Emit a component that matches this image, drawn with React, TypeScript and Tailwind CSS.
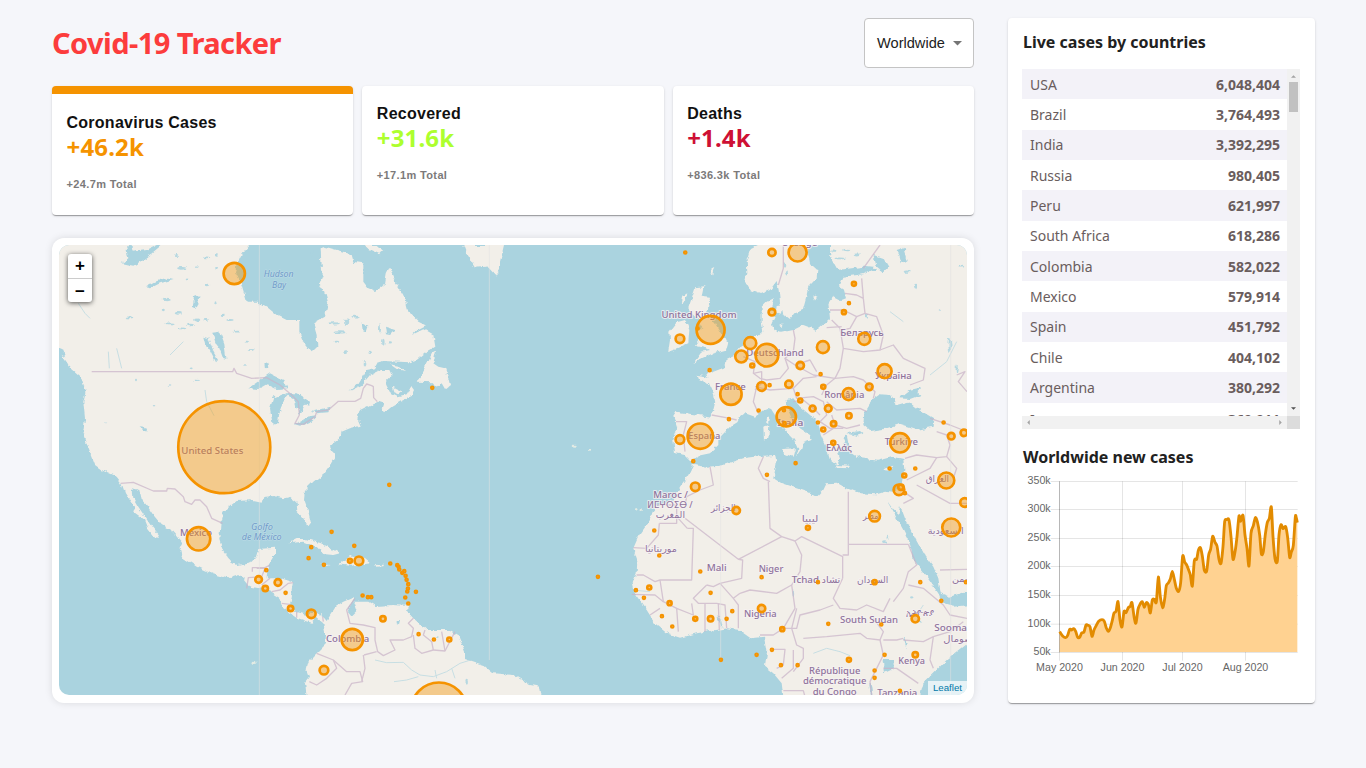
import React from "react";

const countries: [string, string][] = [
  ["USA", "6,048,404"],
  ["Brazil", "3,764,493"],
  ["India", "3,392,295"],
  ["Russia", "980,405"],
  ["Peru", "621,997"],
  ["South Africa", "618,286"],
  ["Colombia", "582,022"],
  ["Mexico", "579,914"],
  ["Spain", "451,792"],
  ["Chile", "404,102"],
  ["Argentina", "380,292"],
  ["Iran", "369,911"],
];

/* Map geometry is stored at three units per screen pixel. */
const americas =
  "27,30 600,30 575,60 560,90 555,110 575,150 590,200 625,200 650,215 680,240 710,255 748,255 748,290 760,320 785,352 802,335 800,300 790,265 825,245 835,205 825,170 805,155 818,120 814,80 812,40 825,35 880,50 905,62 910,80 940,85 940,140 955,160 975,168 1005,145 1010,115 1018,98 1035,140 1060,180 1070,220 1085,240 1105,260 1130,272 1095,290 1085,300 1120,283 1150,300 1156,335 1130,350 1100,375 1080,382 1000,378 985,382 975,400 950,405 925,445 895,470 935,450 960,420 990,405 1018,405 1025,420 1005,440 1010,452 1020,472 1045,484 1070,478 1083,455 1092,468 1085,483 1050,500 1025,515 1005,532 995,520 1000,505 985,500 960,510 930,525 922,550 932,572 900,580 875,590 870,610 850,625 840,635 855,665 840,690 822,715 790,740 765,765 762,795 775,830 782,860 772,874 760,850 742,830 740,800 720,785 700,790 670,783 640,786 635,803 600,796 560,798 520,830 512,860 508,915 520,950 545,980 565,990 605,980 618,965 625,942 675,938 675,960 660,985 652,1010 650,1030 690,1030 732,1043 725,1085 720,1110 735,1130 770,1140 800,1130 822,1145 830,1155 855,1115 880,1100 915,1085 900,1110 893,1130 905,1145 920,1130 910,1100 955,1100 975,1113 1030,1110 1075,1113 1068,1125 1090,1150 1130,1185 1200,1185 1225,1200 1245,1250 1245,1272 1300,1290 1330,1315 1390,1320 1440,1350 1470,1355 1475,1385 770,1385 765,1345 780,1325 770,1300 775,1280 800,1255 825,1230 825,1190 820,1165 800,1148 785,1163 740,1148 700,1120 690,1090 660,1070 640,1062 600,1055 580,1030 565,1020 535,1030 490,1018 440,995 395,965 390,945 400,925 370,890 335,870 310,840 290,810 275,795 268,765 248,760 250,790 265,815 285,845 305,875 325,900 320,912 295,880 285,855 250,830 255,815 245,805 225,775 215,745 200,725 160,708 135,690 115,640 100,590 105,550 100,500 107,470 95,430 60,400 35,340 27,325";

const oldWorld =
  "2340,20 2340,60 2365,105 2405,100 2440,95 2480,100 2440,118 2380,125 2370,150 2382,168 2388,190 2375,195 2350,182 2335,205 2340,250 2315,272 2300,285 2260,270 2230,285 2190,293 2170,285 2165,262 2178,235 2160,225 2172,190 2150,200 2135,215 2135,262 2140,290 2125,303 2095,303 2075,330 2050,365 2030,375 2025,400 1990,413 1970,403 1975,425 1940,420 1945,433 1980,448 1990,470 1996,500 1985,545 1910,535 1880,530 1870,545 1882,580 1870,615 1875,655 1905,660 1925,680 1945,662 1980,655 2005,630 2005,612 2040,575 2062,562 2070,545 2085,535 2115,545 2140,527 2160,520 2178,548 2208,590 2232,615 2245,645 2238,665 2255,640 2258,622 2285,612 2280,600 2250,580 2225,550 2212,520 2210,495 2230,490 2250,515 2280,540 2305,565 2312,600 2330,640 2340,672 2362,690 2370,668 2360,640 2390,640 2380,612 2400,592 2430,588 2390,600 2395,625 2400,650 2430,670 2485,677 2530,665 2560,672 2563,705 2555,745 2530,773 2505,770 2480,778 2430,775 2390,760 2360,743 2330,745 2320,765 2300,786 2270,770 2195,745 2170,730 2180,685 2175,660 2140,662 2080,670 2010,692 1970,695 1930,690 1915,720 1890,755 1870,795 1815,815 1800,855 1765,905 1750,940 1762,975 1760,1015 1748,1045 1755,1075 1790,1125 1815,1165 1850,1195 1890,1208 1940,1195 2030,1180 2070,1185 2105,1210 2145,1205 2152,1245 2145,1295 2170,1315 2195,1345 2200,1385 2610,1385 2620,1345 2650,1315 2690,1275 2760,1220 2760,20";

const islands = [
  "1240,30 1250,55 1275,95 1310,92 1338,122 1350,105 1350,80 1362,30",
  "945,30 980,30 1000,48 990,58 955,42",
  "1150,350 1158,348 1150,385 1165,395 1185,400 1195,430 1200,450 1185,462 1175,445 1160,458 1150,442 1100,440 1115,420",
  "1020,388 1045,392 1065,408 1040,402",
  "1025,455 1055,470 1045,478 1030,472",
  "35,360 60,372 100,395 125,425 100,415 60,395",
  "715,925 740,912 770,912 810,925 870,955 850,960 820,957 800,935 760,920",
  "868,988 900,960 945,972 960,985 900,992",
  "978,990 1002,989 1000,994 980,995",
  "810,987 842,990 825,995",
  "1062,1113 1075,1110 1072,1122 1060,1122",
  "2140,22 2100,42 2090,75 2092,115 2085,140 2100,165 2130,177 2160,165 2180,138 2186,165 2190,200 2200,240 2220,255 2236,235 2258,225 2270,180 2275,155 2300,130 2302,105 2280,85 2274,55 2282,22",
  "1935,160 1960,157 1955,182 1980,185 1975,215 1970,235 1995,265 2010,290 2020,312 2035,320 2028,345 1990,355 1955,370 1930,385 1955,350 1980,345 1962,335 1935,330 1948,310 1940,290 1960,280 1945,255 1930,240 1915,220 1925,190",
  "1880,262 1905,255 1918,285 1915,325 1880,340 1855,348 1860,315 1858,290",
  "2180,210 2198,208 2196,240 2178,235",
  "2200,642 2235,640 2228,665 2200,655",
  "2140,575 2158,570 2155,612 2142,618",
  "2148,545 2158,545 2154,567 2146,560",
  "2358,690 2400,692 2395,700 2360,698",
  "2503,698 2530,692 2522,707 2508,706",
  "2290,185 2302,180 2295,200",
  "2190,270 2200,265 2198,280",
  "1985,100 1995,95 1990,118 1984,115",
  "1900,185 1912,178 1905,200 1895,205",
];

const waters = [
  "2440,570 2443,530 2465,495 2490,478 2520,480 2540,510 2575,500 2600,520 2650,550 2648,575 2600,585 2545,568 2500,582 2460,588",
  "2548,490 2580,465 2615,457 2602,472 2612,480 2580,492",
  "2398,598 2430,588 2440,596 2420,602",
  "2508,793 2530,825 2545,838 2550,810 2565,850 2590,900 2620,955 2650,995 2665,1030 2672,1075 2700,1085 2760,1065 2760,1110 2710,1115 2675,1105 2665,1075 2630,1025 2592,975 2578,920 2560,885 2535,840",
  "215,85 235,70 230,45 240,30 250,50 290,45 320,30 335,30 305,55 270,80 250,92",
  "285,157 315,140 345,130 368,135 330,145 300,160",
  "428,218 432,185 448,180 445,205 436,222",
  "487,293 510,290 523,325 529,375 520,372 508,340 496,325",
  "460,305 475,310 490,350 504,375 498,382 480,345 465,325",
  "595,460 640,428 660,415 700,435 712,460 680,462 650,448 625,462",
  "700,476 670,488 660,520 668,568 684,568 688,530 700,500 718,480",
  "705,475 740,475 780,500 778,512 765,508 750,540 735,510 730,490",
  "732,570 770,548 802,544 785,560 750,575",
  "785,530 842,515 835,532 800,535",
  "646,385 655,380 658,395 648,402",
  "272,573 288,578 286,590 278,585",
  "2470,60 2500,70 2515,95 2500,112 2480,95",
  "2540,45 2560,38 2570,75 2555,85 2548,60",
  "2498,1275 2530,1275 2532,1302 2505,1315",
  "2458,1345 2465,1345 2470,1378 2462,1378",
  "2565,1205 2572,1225 2570,1240 2560,1210",
  "1005,275 1015,278 1035,285 1020,300 1008,298",
  "935,265 955,275 950,290 938,285",
  "903,1110 915,1115 912,1135 902,1125",
  "1040,1155 1050,1155 1046,1172 1040,1168",
  "2002,1140 2012,1150 2018,1178 2012,1175",
  "725,30 755,30 740,45",
  "778,40 792,40 785,65",
];

const specks: [number, number, number, number][] = [
  [395, 100, 18, 6], [470, 70, 10, 4], [440, 95, 12, 5], [500, 60, 8, 12], [238, 247, 14, 4], [120, 90, 12, 3],
  [350, 195, 16, 5], [385, 235, 14, 6], [360, 265, 18, 4], [420, 270, 16, 5], [440, 255, 14, 6], [520, 240, 10, 5],
  [540, 255, 14, 4], [470, 150, 10, 5], [495, 205, 6, 9], [560, 290, 12, 4], [590, 320, 9, 4], [605, 345, 12, 4],
  [850, 265, 22, 5], [870, 292, 26, 5], [890, 260, 10, 14], [915, 245, 14, 4], [860, 320, 10, 4], [945, 385, 5, 14],
  [885, 350, 8, 6], [957, 352, 7, 7], [1000, 320, 5, 12], [1020, 322, 8, 5], [990, 280, 4, 18], [168, 565, 5, 4],
  [315, 512, 5, 3], [440, 436, 14, 3], [425, 400, 8, 4], [585, 390, 8, 3], [258, 435, 4, 5], [360, 450, 5, 3],
  [380, 60, 10, 4], [410, 130, 8, 4], [500, 100, 7, 6], [395, 280, 14, 4], [340, 225, 6, 5], [470, 255, 9, 4],
  [2595, 155, 8, 12], [2570, 110, 12, 5], [2450, 245, 6, 8], [2670, 225, 5, 3], [2700, 330, 6, 30], [2720, 400, 4, 18],
  [2735, 95, 10, 4], [2390, 45, 18, 5], [2370, 70, 22, 4], [2420, 60, 12, 6], [2350, 50, 8, 5], [2205, 90, 5, 12],
  [2210, 115, 5, 9], [2505, 920, 12, 6], [2515, 905, 3, 8], [2585, 1090, 6, 5], [2610, 1160, 5, 4], [2230, 1075, 3, 12],
  [1250, 1340, 5, 8], [1165, 1203, 5, 4],
];

const rivers = [
  "975,1275 1010,1283 1060,1282 1085,1305 1110,1320 1150,1325 1190,1310 1230,1285 1262,1275",
  "1032,1340 1070,1335 1105,1325", "1160,1330 1155,1305", "1215,1330 1205,1300",
  "85,205 105,235 120,250", "465,465 470,500 492,542", "2620,1110 2600,1140", "2290,1255 2330,1240 2370,1250 2400,1262",
  "200,340 215,400", "175,350 178,400", "360,360 400,320", "2520,230 2560,260", "2640,420 2690,380 2720,320",
  "1745,1065 1800,1070",
];

const borders = [
  "125,410 548,410 552,400 560,415 605,430 650,428 690,450 725,480 745,500 748,540 735,565 760,568 795,545 800,530 835,525 865,499 915,499 932,490 940,460 950,447 965,452 970,455 971,488 982,500",
  "212,745 250,742 310,768 350,768 352,760 375,762 400,785 405,800 425,808 435,795 450,795 470,815 485,850 518,865",
  "607,1010 607,998 645,998 660,990", "590,1060 595,1028 635,1025 645,1000 620,1000", "635,1050 660,1030", "665,1070 690,1065 715,1045 730,1043", "695,1105 720,1108", "740,1148 740,1130", "820,1160 818,1145",
  "915,1090 890,1125 900,1165 940,1170 975,1178 975,1215 983,1250 1000,1262 1035,1245 1020,1215 1060,1215 1085,1205 1090,1180 1075,1165 1090,1150",
  "800,1255 850,1275 860,1300 830,1330 800,1350 778,1340", "850,1275 890,1310 930,1310 938,1340 905,1345 885,1380", "942,1260 980,1250", "940,1260 945,1300 935,1340",
  "1090,1200 1095,1240 1115,1255 1150,1245 1145,1220 1120,1200 1125,1185", "1150,1245 1185,1248 1215,1190", "1185,1248 1175,1190",
  "2200,30 2200,100 2185,150", "2490,30 2440,100", "2435,130 2440,190 2420,180 2385,175", "2440,190 2445,235 2420,245 2380,225 2340,225", "2445,235 2480,245 2500,300 2490,345 2440,350 2380,340 2370,280 2345,255", "2375,275 2330,278", "2420,245 2400,280 2375,285",
  "2490,345 2530,330 2560,370 2625,400 2620,435 2580,450", "2380,340 2370,400 2355,430 2290,420 2235,390 2205,370 2230,350 2235,310 2230,285",
  "2235,390 2280,375 2300,410", "2205,370 2215,400 2190,430 2150,435 2130,430 2110,415 2115,380 2080,365", "2115,455 2160,465 2230,460 2260,430 2300,425", "2120,455 2110,500 2125,535", "2110,415 2135,410 2135,445 2115,465",
  "2230,460 2240,490 2290,485 2320,500 2330,540 2310,560", "2355,430 2330,450 2315,480", "2355,430 2410,425 2440,435 2475,470 2470,490", "2330,500 2360,525 2430,520 2450,530", "2345,540 2355,570 2390,580 2430,570", "2310,560 2340,580 2380,580", "2320,600 2350,580", "2230,500 2260,495 2290,520 2310,540", "1985,540 2040,550 2060,555", "1878,560 1910,560 1900,600 1905,650",
  "2640,550 2700,570 2751,590", "2565,670 2600,660 2660,668 2690,665 2700,630 2690,600 2660,590", "2690,665 2720,700 2710,730", "2660,668 2640,700 2600,720 2570,735",
  "1980,695 1990,750 1950,765 1910,785 1905,810", "1828,865 1880,865 1880,810 1820,810", "1828,865 1825,900 1790,940 1750,938", "1912,880 1930,880 1925,1035 1830,1035 1815,1040 1780,1020 1760,1020", "1905,850 2065,973 2195,905 2160,880 2155,740", "1912,880 1880,845", "2140,665 2125,700 2140,730 2160,740", "2065,973 2078,975 2075,1030 2010,1045 1990,1055 1970,1050", "2195,905 2235,918 2255,905 2378,965 2378,1030", "2235,918 2255,960 2250,1010 2225,1050", "2395,770 2395,960 2378,960", "2395,928 2575,928", "2378,1030 2350,1090 2370,1120 2420,1125 2450,1110 2500,1130 2520,1090", "2575,928 2600,990 2575,1010 2560,1060 2530,1100",
  "2070,1075 2100,1065 2180,1075 2225,1050 2235,1120 2200,1180 2170,1200 2130,1200", "2010,1045 2050,1090 2065,1110 2065,1180", "2050,1090 2070,1075", "1970,1050 1930,1090 1945,1105 2000,1105 2025,1110 2030,1180", "1925,1105 1930,1140 1880,1120 1885,1190", "1965,1105 1965,1190", "2005,1105 2008,1185", "1830,1035 1840,1100 1880,1120", "1745,1078 1815,1080 1840,1100", "1800,1140 1830,1120",
  "2200,1180 2240,1180 2250,1140 2310,1125 2350,1110", "2240,1120 2225,1180 2240,1230 2260,1240 2260,1270 2230,1310", "2260,1210 2330,1205 2430,1195 2450,1210 2490,1215 2500,1190 2470,1150", "2170,1243 2205,1243 2200,1290 2180,1300", "2230,1245 2230,1300 2195,1330", "2200,1367 2260,1367 2265,1385", "2490,1215 2500,1260 2480,1300 2460,1340 2465,1380", "2500,1300 2540,1300 2605,1345", "2500,1215 2540,1215 2560,1210", "2560,1215 2620,1220 2650,1205 2640,1275 2650,1300", "2575,1050 2620,1060 2680,1110 2700,1140 2751,1150", "2650,1205 2700,1190 2740,1160",
  "2560,770 2590,790 2560,805", "2600,750 2700,805 2751,805", "2670,1005 2751,1003", "2720,420 2745,410 2725,440 2751,470",
];

type Label = [string, number, number, number, number, boolean?];
const labels: Label[] = [
  ["United States", 487, 656, 27, 186], ["México", 438, 904, 27, 96], ["Colombia", 893, 1221, 27, 130],
  ["Hudson", 686, 126, 26, 90, true], ["Bay", 687, 158, 26, 42, true], ["Golfo", 636, 884, 26, 66, true], ["de México", 635, 916, 26, 120, true],
  ["United Kingdom", 1947, 249, 27, 225], ["Sverige", 2250, 34, 27, 104], ["Беларусь", 2436, 302, 27, 130], ["Deutschland", 2175, 363, 27, 172], ["Україна", 2530, 433, 27, 110],
  ["France", 2041, 466, 27, 92], ["România", 2383, 488, 27, 120], ["España", 1963, 612, 27, 96], ["Italia", 2221, 573, 27, 78], ["Türkiye", 2554, 631, 27, 100], ["Ελλάς", 2367, 647, 27, 78],
  ["Maroc /", 1862, 788, 27, 104], ["ⵍⵎⵖⵔⵉⴱ /", 1860, 819, 27, 136], ["المغرب", 1861, 850, 29, 88], ["الجزائر", 2020, 829, 29, 74], ["ليبيا", 2280, 861, 29, 50], ["مصر", 2462, 851, 29, 46],
  ["العراق", 2662, 742, 29, 70], ["السعودية", 2687, 898, 29, 108], ["موريتانيا", 1833, 952, 29, 96], ["Mali", 2000, 1009, 27, 60], ["Niger", 2163, 1010, 27, 74], ["Tchad تشاد", 2298, 1043, 28, 146], ["السودان", 2468, 1044, 29, 94],
  ["اليمن", 2738, 1041, 29, 64], ["Nigeria", 2131, 1147, 27, 98], ["South Sudan", 2457, 1164, 27, 174], ["ኢትዮጵያ", 2610, 1144, 28, 84], ["Soomaaliya", 2735, 1188, 27, 164], ["الصومال", 2733, 1222, 29, 106],
  ["Kenya", 2585, 1288, 27, 80], ["République", 2354, 1316, 27, 154], ["démocratique", 2354, 1348, 27, 190], ["du Congo", 2354, 1380, 27, 132], ["Tanzania", 2542, 1382, 27, 120],
];

type Dot = [number, number, number?];
const dots: Dot[] = [
  [552, 115, 36], [522, 636, 142], [445, 911, 39], [844, 890], [783, 936], [775, 969], [821, 989], [912, 932], [899, 977, 10], [926, 977, 17],
  [648, 1005], [625, 1033, 14], [645, 1060, 12], [683, 1042, 14], [706, 1073], [721, 1120, 12], [783, 1136, 17], [906, 1213, 36], [821, 1305, 17],
  [1017, 749], [1020, 985], [1041, 990], [1045, 995], [1047, 1003], [1056, 1013], [1062, 1008], [1066, 1022], [1069, 1034], [1074, 1047], [1073, 1060],
  [1071, 1069], [1097, 1070], [1065, 1087], [1074, 1105], [937, 1081], [953, 1086], [963, 1086], [998, 1151, 12], [1105, 1197], [1151, 1213],
  [1197, 1213, 10], [1166, 1426, 88], [1643, 1025], [1812, 886], [1827, 961], [1757, 1065], [1797, 1057, 10], [1781, 1088], [1146, 458],
  [1905, 52], [2165, 52, 15], [2242, 52, 31], [2411, 146, 10], [2396, 204], [2381, 231, 10], [2165, 231, 14], [1981, 284, 46], [1942, 280],
  [1889, 311, 17], [2100, 324, 22], [2073, 364, 22], [2150, 360, 38], [2318, 336, 22], [2442, 311, 22], [2106, 391, 10], [2250, 391, 15], [2311, 417],
  [1978, 405], [2042, 477, 36], [2134, 454, 17], [2158, 450], [2216, 447, 15], [2319, 455, 10], [2503, 408, 25], [2457, 455, 14], [2395, 477, 22],
  [2242, 477], [2250, 496, 10], [2287, 520, 13], [2334, 520, 14], [2396, 542, 12], [2303, 562], [2350, 566, 12], [2319, 583, 10], [2349, 623, 10],
  [2208, 545, 33], [2201, 525], [2203, 564], [2125, 526], [2036, 552], [1950, 603, 42], [1889, 613, 17], [1929, 678], [2236, 684], [2150, 719],
  [2549, 623, 33], [2680, 562], [2703, 603, 14], [2741, 593, 14], [2518, 700], [2595, 700], [2562, 721, 10], [2688, 736, 28], [2546, 764, 20],
  [2552, 756, 12], [2564, 774], [2743, 802, 17], [2703, 877, 31], [2473, 843, 20], [1935, 755, 17], [2058, 826, 15], [2273, 878, 10], [1950, 1009],
  [2134, 1026], [2303, 1041], [2473, 1041, 10], [2610, 1041], [2747, 1041], [2673, 1097], [2595, 1151, 15], [2493, 1168], [2334, 1166], [2134, 1120, 15],
  [1981, 1073], [2046, 1128], [2029, 1151], [1981, 1151, 12], [1935, 1151, 10], [1858, 1104, 10], [1835, 1143], [1866, 1174], [2196, 1182, 10],
  [2165, 1244], [2119, 1259], [2012, 1274], [2192, 1290], [2242, 1290], [2396, 1274, 10], [2503, 1259], [2595, 1259, 12], [2473, 1306], [2473, 1328], [2549, 1367],
];

function WorldMap() {
  return (
    <svg viewBox="27 30 2724 1350" className="block h-full w-full rounded-[10px]" role="img" aria-label="Cases map">
      <defs>
        <filter id="coast" filterUnits="userSpaceOnUse" x="0" y="0" width="2780" height="1420" colorInterpolationFilters="sRGB">
          <feTurbulence type="fractalNoise" baseFrequency="0.05" numOctaves="3" seed="4" />
          <feDisplacementMap in="SourceGraphic" scale="15" xChannelSelector="R" yChannelSelector="G" />
        </filter>
      </defs>
      <rect x="0" y="0" width="2780" height="1420" fill="#aad3df" />
      <g filter="url(#coast)">
        <g fill="#f2efe9">
          <polygon points={"-40,-20 620,-20 " + americas.replace("27,30 ", "").replace("27,325", "0,325 -40,325")} />
          <polygon points={oldWorld} />
          {islands.map((p) => <polygon key={p} points={p} />)}
        </g>
        <g fill="#aad3df">
          {waters.map((p) => <polygon key={p} points={p} />)}
          {specks.map(([x, y, rx, ry]) => <ellipse key={x + "-" + y} cx={x} cy={y} rx={rx * 0.75} ry={ry * 0.7} opacity="0.85" />)}
        </g>
        <g fill="#e3ebe4">
          <ellipse cx="612" cy="1282" rx="8" ry="5" />
          <ellipse cx="1575" cy="632" rx="7" ry="3" />
          <ellipse cx="1620" cy="647" rx="6" ry="3" />
          <ellipse cx="1757" cy="823" rx="5" ry="4" />
          <ellipse cx="1772" cy="827" rx="4" ry="4" />
        </g>
      </g>
      <g fill="none" stroke="#aad3df" strokeWidth="3" opacity="0.6">
        {rivers.map((p) => <polyline key={p} points={p} />)}
      </g>
      <g fill="none" stroke="#c9b3c8" strokeWidth="4" opacity="0.7" strokeLinejoin="round">
        {borders.map((p) => <polyline key={p} points={p} />)}
      </g>
      <g stroke="#e2e2e2" strokeWidth="3" opacity="0.55">
        <path d="M628 30V1380M1318 30V1275M2012 690V1275M2702 30V1380" />
      </g>
      <g textAnchor="middle" paintOrder="stroke" strokeLinejoin="round" fontFamily='"Noto Sans","DejaVu Sans",sans-serif'>
        {labels.map(([t, x, y, size, w, sea]) => (
          <text
            key={t} x={x} y={y} fontSize={size} textLength={w} lengthAdjust="spacingAndGlyphs"
            fill={sea ? "#6f9bc9" : "#8f739c"} stroke={sea ? "#c4dfea" : "#f6f2f3"} strokeWidth={sea ? 3 : 6}
            strokeOpacity="0.8" fontStyle={sea ? "italic" : "normal"} fontWeight={sea ? 400 : 500}
          >
            {t}
          </text>
        ))}
      </g>
      <g fill="#f59300" stroke="#f59300" strokeWidth="8" fillOpacity="0.4">
        {dots.map(([x, y, r = 7]) => <circle key={x + "-" + y} cx={x + 0.8} cy={y + 0.5} r={r - 4} />)}
      </g>
    </svg>
  );
}

const series: [number, number][] = [
  [179, 575], [188, 588], [197, 593], [203, 586], [209, 568], [215, 570], [221, 566], [227, 574], [233, 592], [239, 592], [245, 579], [252, 576], [258, 555], [264, 556], [270, 560], [276, 589],
  [282, 570], [289, 556], [296, 544], [306, 539], [313, 544], [319, 564], [325, 574], [331, 563], [337, 541], [342, 519], [348, 514], [354, 485], [360, 540], [366, 561], [372, 515], [378, 518],
  [385, 503], [391, 499], [396, 488], [403, 535], [408, 549], [414, 508], [420, 493], [427, 485], [433, 502], [439, 488], [445, 493], [451, 519], [457, 480], [463, 478], [469, 486], [475, 411],
  [481, 470], [488, 503], [494, 477], [499, 437], [505, 429], [511, 417], [517, 394], [523, 418], [529, 445], [536, 454], [542, 428], [548, 348], [554, 366], [560, 375], [566, 390], [571, 405],
  [577, 438], [583, 362], [590, 358], [595, 331], [601, 323], [607, 348], [613, 391], [620, 393], [626, 345], [632, 327], [638, 289], [645, 307], [651, 318], [657, 358], [663, 370], [669, 320],
  [674, 245], [680, 239], [687, 240], [693, 290], [699, 358], [706, 330], [711, 290], [717, 228], [722, 244], [729, 226], [735, 285], [741, 325], [747, 378], [753, 280], [760, 257], [766, 233],
  [772, 245], [779, 285], [784, 341], [790, 335], [796, 283], [802, 247], [808, 235], [814, 201], [819, 290], [825, 356], [832, 364], [837, 285], [843, 254], [849, 266], [857, 260], [863, 293],
  [869, 352], [874, 336], [880, 316], [886, 231], [889, 234], [892, 248],
];

function smooth(pts: [number, number][]) {
  let d = `M${pts[0][0]} ${pts[0][1]}`;
  for (let i = 1; i < pts.length; i++) {
    const a = pts[Math.max(0, i - 2)];
    const b = pts[i - 1];
    const c = pts[i];
    const e = pts[Math.min(pts.length - 1, i + 1)];
    const k = 0.14;
    d += `C${b[0] + (c[0] - a[0]) * k} ${b[1] + (c[1] - a[1]) * k} ${c[0] - (e[0] - b[0]) * k} ${c[1] - (e[1] - b[1]) * k} ${c[0]} ${c[1]}`;
  }
  return d;
}

function CasesChart() {
  const line = smooth(series);
  const rows: [string, number][] = [["350k", 124.5], ["300k", 208.5], ["250k", 295.5], ["200k", 379.5], ["150k", 466.5], ["100k", 552.5], ["50k", 637.5]];
  const months: [string, number][] = [["May 2020", 178.5], ["Jun 2020", 367.5], ["Jul 2020", 547.5], ["Aug 2020", 736.5]];
  return (
    <svg viewBox="66 90 840 630" className="block h-[210px] w-[280px]" role="img" aria-label="Worldwide new cases chart">
      <g stroke="#000" strokeOpacity="0.1" strokeWidth="3">
        {rows.map(([t, y]) => <path key={t} d={`M152 ${y}H893`} />)}
        {months.map(([t, x]) => <path key={t} d={`M${x} 124V662`} />)}
      </g>
      <path d={`${line}L892 636L178.5 636Z`} fill="#ffd291" />
      <path d="M178.5 124V637" stroke="#000" strokeOpacity="0.2" strokeWidth="3" />
      <path d={line} fill="none" stroke="#e28b00" strokeWidth="8.5" strokeLinejoin="round" />
      <g fill="#666" fontSize="32" fontFamily='"Liberation Sans",sans-serif'>
        {rows.map(([t, y]) => <text key={t} x="152" y={y + 8} textAnchor="end">{t}</text>)}
        {months.map(([t, x]) => <text key={t} x={x} y="692" textAnchor="middle">{t}</text>)}
      </g>
    </svg>
  );
}

const cardShadow = "shadow-[0px_2px_1px_-1px_rgba(0,0,0,0.2),0px_1px_1px_0px_rgba(0,0,0,0.14),0px_1px_3px_0px_rgba(0,0,0,0.12)]";
const humanist = "font-['Noto_Sans',sans-serif]";

function InfoBox({ title, value, total, color, active }: { title: string; value: string; total: string; color: string; active?: boolean }) {
  return (
    <section className={`h-[129px] flex-1 overflow-hidden rounded bg-white px-[14.5px] ${cardShadow} ${active ? "border-t-8 border-[#f59300] pt-px" : ""}`}>
      <h2 className="mt-[17px] text-base leading-[22px] font-bold tracking-[0.26px] text-[#111]">{title}</h2>
      <p className={`-mt-[2px] text-[24px] leading-[29px] font-bold tracking-[0.15px] ${humanist} ${color}`}>{value}</p>
      <p className="mt-4 text-[11px] leading-[15px] font-bold tracking-[0.36px] text-[#7c7a7a]">{total}</p>
    </section>
  );
}

export default function App() {
  return (
    <div className="flex h-screen gap-[34px] overflow-hidden bg-[#f5f6fa] pt-[18px] pl-[52px] font-['Liberation_Sans',sans-serif]">
      <main className="flex w-[922px] flex-col">
        <header className="flex h-[50px] items-center justify-between">
          <h1 className={`-mt-px text-[29px] leading-none font-bold tracking-[-0.56px] text-[#fc3c3c] ${humanist}`}>Covid-19 Tracker</h1>
          <button className="flex h-[50px] w-[110px] items-center rounded border border-[#c4c4c4] bg-white pt-px pl-3 text-[14.6px] text-[#212121]">
            Worldwide
            <svg viewBox="0 0 10 5" className="ml-2 h-[4.5px] w-[9px] fill-[#757575]"><path d="M0 0H10L5 5Z" /></svg>
          </button>
        </header>
        <div className="mt-[18px] flex gap-[9px]">
          <InfoBox title="Coronavirus Cases" value="+46.2k" total="+24.7m Total" color="text-[#f59300]" active />
          <InfoBox title="Recovered" value="+31.6k" total="+17.1m Total" color="text-[#adff2f]" />
          <InfoBox title="Deaths" value="+1.4k" total="+836.3k Total" color="text-[#ce1034]" />
        </div>
        <section className="relative mt-[23px] h-[465px] rounded-xl bg-white p-[7px] pb-2 shadow-[0_0_8px_-1px_rgba(0,0,0,0.15)]">
          <WorldMap />
          <div className="absolute top-4 left-4 w-6 overflow-hidden rounded-[3px] bg-white text-center text-[17px] font-bold text-black shadow-[0_1px_5px_rgba(0,0,0,0.65)]">
            <div className="flex h-[25px] items-center justify-center border-b border-[#ccc]">+</div>
            <div className="flex h-[23px] items-center justify-center pt-[2px]">−</div>
          </div>
          <div className="absolute right-[7px] bottom-2 flex h-[14px] w-[39px] items-center justify-center overflow-hidden rounded-br-[10px] bg-white/70 text-[9.7px] text-[#0078a8]">Leaflet</div>
        </section>
      </main>

      <aside className={`h-[685px] w-[307px] rounded bg-white px-[14px] ${cardShadow}`}>
        <h3 className={`pt-[11px] pl-px text-base leading-[26px] font-bold text-[#212121] ${humanist}`}>Live cases by countries</h3>
        <div className="mt-[14px] grid h-[360px] w-[278px] grid-cols-[265px_13px] grid-rows-[347px_13px] overflow-hidden">
          <div className={`overflow-hidden text-[14px] text-[#6a5d5d] ${humanist}`}>
            {countries.map(([name, cases], i) => (
              <div key={name} className={`flex h-[30.35px] items-center justify-between pr-[7px] pl-2 last:pt-[3px] ${i % 2 === 0 ? "bg-[#f3f2f8]" : "bg-white"}`}>
                <span>{name}</span>
                <strong className="font-bold">{cases}</strong>
              </div>
            ))}
          </div>
          <div className="flex flex-col items-center justify-between bg-[#f1f1f1] pt-[6px] pb-[6px]">
            <div className="flex flex-col items-center gap-[4px]">
              <svg viewBox="0 0 6 3" className="h-[3px] w-[5px] fill-[#a3a3a3]"><path d="M0 3L3 0L6 3Z" /></svg>
              <div className="h-[30px] w-[9px] bg-[#c1c1c1]" />
            </div>
            <svg viewBox="0 0 6 3" className="h-[3px] w-[5px] fill-[#505050]"><path d="M0 0H6L3 3Z" /></svg>
          </div>
          <div className="flex items-center justify-between bg-[#f1f1f1] px-[5px]">
            <svg viewBox="0 0 3 6" className="h-[5px] w-[3px] fill-[#a3a3a3]"><path d="M3 0V6L0 3Z" /></svg>
            <svg viewBox="0 0 3 6" className="h-[5px] w-[3px] fill-[#a3a3a3]"><path d="M0 0V6L3 3Z" /></svg>
          </div>
          <div className="bg-[#dcdcdc]" />
        </div>
        <h3 className={`mt-[15px] pl-px text-base leading-[26px] font-bold text-[#212121] ${humanist}`}>Worldwide new cases</h3>
        <CasesChart />
      </aside>
    </div>
  );
}
